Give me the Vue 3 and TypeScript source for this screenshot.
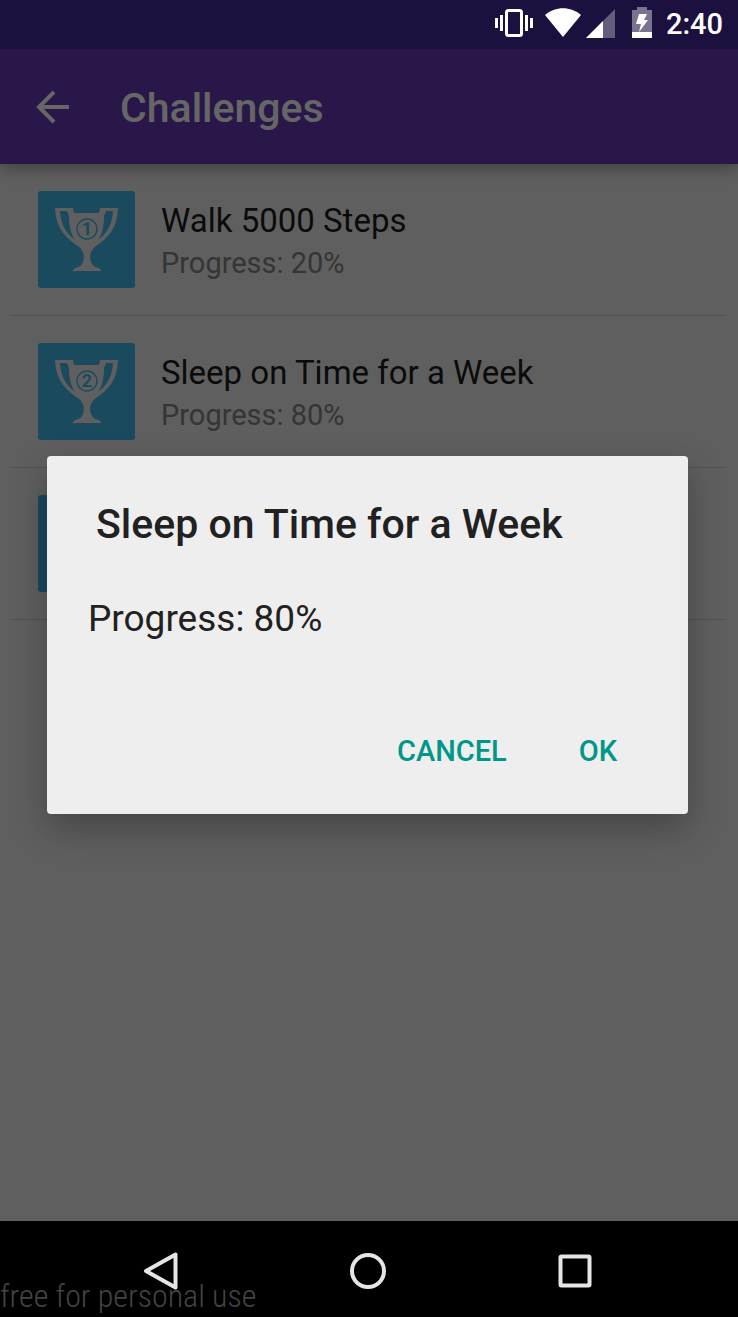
<script setup lang="ts">
interface Challenge {
  id: number
  rank: string
  title: string
  progress: string
}

const challenges: Challenge[] = [
  { id: 1, rank: '1', title: 'Walk 5000 Steps', progress: 'Progress: 20%' },
  { id: 2, rank: '2', title: 'Sleep on Time for a Week', progress: 'Progress: 80%' },
  { id: 3, rank: '', title: '', progress: '' },
]
const selected = challenges[1]
</script>

<template>
  <div class="screen">
    <div class="status">
      <svg class="vibrate" viewBox="0 0 38 30" aria-hidden="true">
        <rect x="11.5" y="2.5" width="15" height="25" rx="2" fill="none" stroke="#fff" stroke-width="3" />
        <path d="M1.5 10v10M6.5 7v16M31.5 7v16M36.5 10v10" stroke="#fff" stroke-width="3" />
      </svg>
      <svg class="wifi" viewBox="0 0 36 30" aria-hidden="true">
        <path d="M0 7C10-2 26-2 36 7L18 29Z" fill="#fff" />
      </svg>
      <svg class="signal" viewBox="0 0 30 30" aria-hidden="true">
        <path d="M30 1V30H1Z" fill="#665d7e" />
        <path d="M18 13V30H1Z" fill="#fff" />
      </svg>
      <svg class="battery" viewBox="0 0 20 31" aria-hidden="true">
        <path d="M5 0H15V3H20V25H0V3H5Z" fill="#7a728f" />
        <path d="M0 25H20V31H0Z" fill="#fff" />
        <path d="M7 7H15L12 13H16L7 25L9 17H4Z" fill="#fff" />
      </svg>
      <span class="clock">2:40</span>
    </div>

    <div class="app">
      <header class="bar">
        <button class="back" type="button" aria-label="Back">
          <svg viewBox="0 0 34 34" aria-hidden="true">
            <path d="M33 17H3M18 2L3 17L18 32" fill="none" stroke="#fff" stroke-width="4" />
          </svg>
        </button>
        <h1>Challenges</h1>
      </header>

      <ul class="list">
        <li v-for="c in challenges" :key="c.id" class="row">
          <svg class="trophy" viewBox="0 0 97 97" aria-hidden="true">
            <rect width="97" height="97" rx="3" fill="#40b9e8" />
            <path
              d="M17 17H35L36 22H61L62 17H80C79 38 70 47 58 55C51 60 51 68 54 73C56 77 63 76 63 80H35C35 76 42 77 44 73C47 68 47 60 40 55C28 47 18 38 17 17Z"
              fill="#eee"
            />
            <path
              d="M22 20H29L31 25C31 36 33 43 37 49C28 42 23 34 22 20ZM75 20H68L66 25C66 36 64 43 60 49C69 42 74 34 75 20Z"
              fill="#40b9e8"
            />
            <template v-if="c.rank">
              <circle cx="49" cy="38" r="10" fill="none" stroke="#40b9e8" stroke-width="1.4" />
              <text x="49" y="44" text-anchor="middle" class="rank">{{ c.rank }}</text>
            </template>
          </svg>
          <div v-if="c.title" class="info">
            <span class="name">{{ c.title }}</span>
            <span class="progress">{{ c.progress }}</span>
          </div>
        </li>
      </ul>

      <div class="scrim">
        <section class="dialog" role="dialog" aria-labelledby="dialog-title">
          <h2 id="dialog-title">{{ selected.title }}</h2>
          <p>{{ selected.progress }}</p>
          <div class="actions">
            <button type="button">CANCEL</button>
            <button type="button">OK</button>
          </div>
        </section>
      </div>
    </div>

    <nav class="nav">
      <span class="watermark">free for personal use</span>
      <button type="button" aria-label="Back">
        <svg viewBox="0 0 40 40" aria-hidden="true">
          <path d="M5 20L34.5 3.500V36.500Z" fill="none" stroke="#e6e6e6" stroke-width="4" stroke-linejoin="round" />
        </svg>
      </button>
      <button type="button" aria-label="Home">
        <svg viewBox="0 0 40 40" aria-hidden="true">
          <circle cx="20" cy="20" r="16" fill="none" stroke="#e6e6e6" stroke-width="4" />
        </svg>
      </button>
      <button type="button" aria-label="Recent apps">
        <svg viewBox="0 0 40 40" aria-hidden="true">
          <rect x="5.500" y="5.500" width="29" height="29" rx="1" fill="none" stroke="#e6e6e6" stroke-width="4" />
        </svg>
      </button>
    </nav>
  </div>
</template>

<style>
body {
  margin: 0;
}
</style>

<style scoped>
.screen {
  display: flex;
  flex-direction: column;
  min-height: 100vh;
  font-family: Roboto, 'Liberation Sans', sans-serif;
  background: #eee;
}
h1,
h2,
p,
ul {
  margin: 0;
  padding: 0;
}
button {
  border: 0;
  padding: 0;
  background: none;
  font-family: inherit;
  cursor: pointer;
}
svg {
  display: block;
  flex: none;
}
.status {
  display: flex;
  justify-content: flex-end;
  align-items: center;
  box-sizing: border-box;
  height: 49px;
  padding: 0 15px 4px 0;
  background: #1c103f;
  color: #fff;
}
.vibrate {
  width: 38px;
  height: 30px;
  margin-right: 12px;
}
.wifi {
  width: 36px;
  height: 30px;
  margin-right: 4px;
}
.signal {
  width: 30px;
  height: 30px;
  margin-right: 17px;
}
.battery {
  width: 20px;
  height: 31px;
  margin-right: 14px;
}
.clock {
  font-size: 29px;
  line-height: 32px;
  font-weight: 500;
  padding-top: 2px;
}
.app {
  position: relative;
  flex: 1;
  display: flex;
  flex-direction: column;
  overflow: hidden;
}
.bar {
  display: flex;
  align-items: center;
  box-sizing: border-box;
  height: 115px;
  padding-left: 36px;
  background: #673ab7;
  color: #fff;
  box-shadow: 0 4px 16px rgba(0, 0, 0, 0.35);
}
.back {
  width: 34px;
  height: 34px;
  margin-right: 50px;
}
h1 {
  font-size: 41px;
  line-height: 48px;
  font-weight: 500;
  padding-top: 2px;
}
.list {
  list-style: none;
  padding: 0 14px 0 12px;
}
.row {
  display: flex;
  align-items: center;
  box-sizing: border-box;
  height: 152px;
  padding: 0 26px;
  gap: 26px;
  border-bottom: 1px solid #cacaca;
}
.trophy {
  width: 97px;
  height: 97px;
}
.rank {
  font-size: 18px;
  font-weight: 700;
  fill: #40b9e8;
}
.info {
  display: flex;
  flex-direction: column;
  padding-top: 4px;
}
.name {
  font-size: 33px;
  line-height: 42px;
  color: #1c1c1c;
}
.progress {
  font-size: 29px;
  line-height: 42px;
  color: #858585;
}
.scrim {
  position: absolute;
  inset: 0;
  display: flex;
  align-items: center;
  padding: 0 50px 0 47px;
  background: rgba(0, 0, 0, 0.6);
}
.dialog {
  flex: 1;
  box-sizing: border-box;
  padding: 42px 51px 38px 41px;
  border-radius: 4px;
  background: #eee;
  color: #212121;
  box-shadow: 0 14px 36px rgba(0, 0, 0, 0.28);
}
h2 {
  padding-left: 8px;
  font-size: 41px;
  line-height: 52px;
  font-weight: 500;
}
p {
  margin-top: 44px;
  font-size: 37px;
  line-height: 50px;
}
.actions {
  display: flex;
  justify-content: flex-end;
  gap: 32px;
  margin-top: 82px;
}
.actions button {
  padding: 0 20px;
  font-size: 29px;
  line-height: 50px;
  font-weight: 500;
  color: #009688;
}
.nav {
  position: relative;
  display: flex;
  justify-content: center;
  align-items: center;
  gap: 167px;
  box-sizing: border-box;
  height: 96px;
  padding: 4px 3px 0 0;
  background: #000;
}
.nav button {
  width: 40px;
  height: 40px;
}
.watermark {
  position: absolute;
  left: 0;
  bottom: 0;
  font-family: 'Roboto Condensed', Roboto, sans-serif;
  font-size: 32px;
  line-height: 42px;
  font-weight: 300;
  color: #444;
}
</style>
